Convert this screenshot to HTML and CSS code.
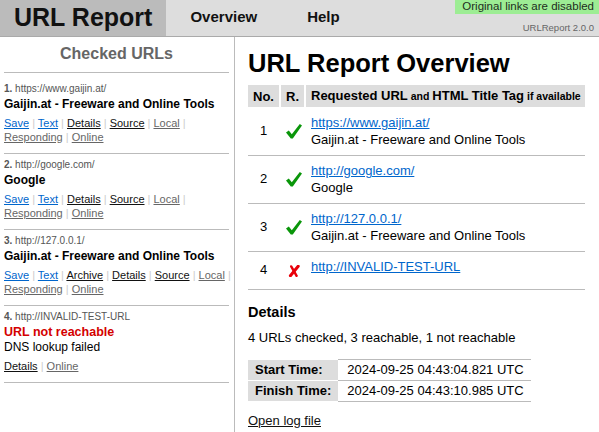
FILE: index.html
```html
<!DOCTYPE html>
<html>
<head>
<meta charset="utf-8">
<title>URL Report</title>
<link rel="stylesheet" href="styles.css">
</head>
<body>
<header class="topbar">
  <div class="logo">URL Report</div>
  <nav class="nav"><span class="nav-item">Overview</span><span class="nav-item">Help</span></nav>
  <div class="badge">Original links are disabled</div>
  <div class="version">URLReport 2.0.0</div>
</header>
<div class="layout">
  <aside class="sidebar">
    <h2 class="side-title">Checked URLs</h2>
    <div class="entry">
      <div class="entry-url"><b>1.</b> https://www.gaijin.at/</div>
      <div class="entry-title">Gaijin.at - Freeware and Online Tools</div>
      <div class="entry-links"><a href="#" class="l-blue">Save</a> <span class="sep">|</span> <a href="#" class="l-blue">Text</a> <span class="sep">|</span> <a href="#" class="l-dark">Details</a> <span class="sep">|</span> <a href="#" class="l-dark">Source</a> <span class="sep">|</span> <a href="#" class="l-gray">Local</a> <span class="sep">|</span> <a href="#" class="l-gray">Responding</a> <span class="sep">|</span> <a href="#" class="l-gray">Online</a></div>
    </div>
    <div class="entry">
      <div class="entry-url"><b>2.</b> http://google.com/</div>
      <div class="entry-title">Google</div>
      <div class="entry-links"><a href="#" class="l-blue">Save</a> <span class="sep">|</span> <a href="#" class="l-blue">Text</a> <span class="sep">|</span> <a href="#" class="l-dark">Details</a> <span class="sep">|</span> <a href="#" class="l-dark">Source</a> <span class="sep">|</span> <a href="#" class="l-gray">Local</a> <span class="sep">|</span> <a href="#" class="l-gray">Responding</a> <span class="sep">|</span> <a href="#" class="l-gray">Online</a></div>
    </div>
    <div class="entry">
      <div class="entry-url"><b>3.</b> http://127.0.0.1/</div>
      <div class="entry-title">Gaijin.at - Freeware and Online Tools</div>
      <div class="entry-links"><a href="#" class="l-blue">Save</a> <span class="sep">|</span> <a href="#" class="l-blue">Text</a> <span class="sep">|</span> <a href="#" class="l-dark">Archive</a> <span class="sep">|</span> <a href="#" class="l-dark">Details</a> <span class="sep">|</span> <a href="#" class="l-dark">Source</a> <span class="sep">|</span> <a href="#" class="l-gray">Local</a> <span class="sep">|</span> <a href="#" class="l-gray">Responding</a> <span class="sep">|</span> <a href="#" class="l-gray">Online</a></div>
    </div>
    <div class="entry">
      <div class="entry-url"><b>4.</b> http://INVALID-TEST-URL</div>
      <div class="entry-title error">URL not reachable</div>
      <div class="entry-note">DNS lookup failed</div>
      <div class="entry-links"><a href="#" class="l-dark">Details</a> <span class="sep">|</span> <a href="#" class="l-gray">Online</a></div>
    </div>
  </aside>
  <main class="main">
    <h1 class="title">URL Report Overview</h1>
    <table class="report">
      <colgroup><col class="c-no"><col class="c-r"><col class="c-url"></colgroup>
      <thead>
        <tr><th class="h-no">No.</th><th class="h-r">R.</th><th class="h-url">Requested URL<small> and </small>HTML Title Tag<small> if available</small></th></tr>
      </thead>
      <tbody>
        <tr>
          <td class="no">1</td>
          <td class="r"><span class="icon"><svg width="16" height="15" viewBox="0 0 16 15"><polygon points="0,8.5 2.8,6.5 5.8,10.2 13.8,0 16,1.6 6.8,14.6 4.8,14.6" fill="#0a960a"/></svg></span></td>
          <td class="url"><a href="#">https://www.gaijin.at/</a><div>Gaijin.at - Freeware and Online Tools</div></td>
        </tr>
        <tr>
          <td class="no">2</td>
          <td class="r"><span class="icon"><svg width="16" height="15" viewBox="0 0 16 15"><polygon points="0,8.5 2.8,6.5 5.8,10.2 13.8,0 16,1.6 6.8,14.6 4.8,14.6" fill="#0a960a"/></svg></span></td>
          <td class="url"><a href="#">http://google.com/</a><div>Google</div></td>
        </tr>
        <tr>
          <td class="no">3</td>
          <td class="r"><span class="icon"><svg width="16" height="15" viewBox="0 0 16 15"><polygon points="0,8.5 2.8,6.5 5.8,10.2 13.8,0 16,1.6 6.8,14.6 4.8,14.6" fill="#0a960a"/></svg></span></td>
          <td class="url"><a href="#">http://127.0.0.1/</a><div>Gaijin.at - Freeware and Online Tools</div></td>
        </tr>
        <tr>
          <td class="no">4</td>
          <td class="r"><span class="icon"><svg width="12" height="12" viewBox="0 0 12 12"><path d="M3.2 1.4 L8.6 10.8" stroke="#e8000a" stroke-width="2.4" stroke-linecap="round" fill="none"/><path d="M10.2 1.2 L2.4 10.8" stroke="#e8000a" stroke-width="3" stroke-linecap="round" fill="none"/></svg></span></td>
          <td class="url"><a href="#">http://INVALID-TEST-URL</a></td>
        </tr>
      </tbody>
    </table>
    <h3 class="details-title">Details</h3>
    <p class="summary">4 URLs checked, 3 reachable, 1 not reachable</p>
    <table class="times">
      <tr><th>Start Time:</th><td>2024-09-25 04:43:04.821 UTC</td></tr>
      <tr><th>Finish Time:</th><td>2024-09-25 04:43:10.985 UTC</td></tr>
    </table>
    <div class="log"><a href="#">Open log file</a></div>
  </main>
</div>
</body>
</html>
```

FILE: styles.css
```css
* { box-sizing: border-box; }
html, body { margin: 0; padding: 0; }
body {
  font-family: "Liberation Sans", Arial, Helvetica, sans-serif;
  font-size: 13px;
  color: #000;
  background: #fff;
}

.topbar {
  position: relative;
  display: flex;
  height: 37px;
  background: #ddd;
  border-bottom: 1px solid #aaa;
}
.logo {
  background: #bbb;
  padding: 0 14px;
  font-size: 25px;
  font-weight: bold;
  line-height: 34px;
  color: #111;
}
.nav {
  display: flex;
  gap: 50px;
  padding-left: 24px;
  font-size: 15px;
  font-weight: bold;
  line-height: 34px;
  color: #111;
}
.badge {
  position: absolute;
  top: 0;
  right: 0;
  height: 14px;
  background: #9ded94;
  color: #1e2e1e;
  font-size: 11.5px;
  line-height: 13px;
  padding: 0 5px 0 7px;
}
.version {
  position: absolute;
  right: 5px;
  top: 22px;
  font-size: 9.5px;
  line-height: 12px;
  color: #666;
}

.layout {
  display: flex;
  min-height: calc(100vh - 37px);
}
.sidebar {
  width: 235px;
  flex: none;
  border-right: 1px solid #bbb;
  padding: 7px 5px 0 4px;
}
.side-title {
  margin: 0 0 5px;
  padding-bottom: 8px;
  border-bottom: 1px solid #bbb;
  font-size: 16px;
  line-height: 20px;
  font-weight: bold;
  color: #666;
  text-align: center;
}
.entry {
  padding: 4px 0 9px;
  border-bottom: 1px solid #bbb;
}
.entry-url {
  font-size: 10px;
  line-height: 14px;
  color: #555;
}
.entry-title {
  font-size: 12px;
  line-height: 16px;
  font-weight: bold;
}
.entry-title.error {
  color: #d40000;
  font-size: 12.5px;
}
.entry-note {
  font-size: 12px;
  line-height: 15px;
}
.entry-links {
  margin-top: 4px;
  margin-right: -5px;
  font-size: 11px;
  line-height: 14px;
}
.entry-links a { text-decoration: underline; }
.l-blue { color: #0066cc; }
.l-dark { color: #111; }
.l-gray { color: #666; }
.sep { color: #ccc; }

.main {
  flex: 1;
  padding: 11px 15px 0 13px;
}
.title {
  margin: 0;
  font-size: 25.5px;
  line-height: 30px;
  font-weight: bold;
}
.report {
  margin-top: 7px;
  width: 337px;
  table-layout: fixed;
  border-collapse: separate;
  border-spacing: 0;
}
.c-no { width: 33px; }
.c-r { width: 25px; }
.c-url { width: 279px; }
.report th {
  background: #ddd;
  font-size: 13px;
  line-height: 15px;
  padding: 3px 5px;
  border-bottom: 1px solid #fff;
  white-space: nowrap;
  font-weight: bold;
}
.report th.h-no, .report th.h-r {
  border-right: 2px solid #fff;
  text-align: center;
  padding: 3px 0;
}
.report th.h-url {
  text-align: left;
  padding: 3px 2px 3px 5px;
}
.report th small {
  font-size: 10.5px;
}
.report td {
  padding: 7px 5px;
  border-bottom: 1px solid #bbb;
  font-size: 13px;
  line-height: 16.5px;
}
.report td.no {
  text-align: center;
  vertical-align: middle;
  padding: 7px 2px 7px 0;
}
.report td.r {
  vertical-align: middle;
  padding: 7px 0;
}
.report td.url {
  vertical-align: top;
  padding-left: 5px;
}
.icon {
  display: flex;
  height: 23px;
  align-items: center;
  justify-content: center;
}
.report a { color: #0066cc; text-decoration: underline; }

.details-title {
  margin: 13px 0 9px;
  font-size: 14.5px;
  line-height: 18px;
  font-weight: bold;
}
.summary {
  margin: 0;
  line-height: 16px;
}
.times {
  margin-top: 13px;
  border-collapse: collapse;
}
.times th {
  background: #ddd;
  text-align: left;
  font-weight: bold;
  padding: 2px 7px;
  line-height: 16px;
  border-top: 1px solid #fff;
  border-bottom: 1px solid #fff;
}
.times td {
  padding: 2px 7px 2px 9px;
  line-height: 16px;
  border-top: 1px solid #bbb;
  border-bottom: 1px solid #bbb;
}
.log {
  margin-top: 11px;
  line-height: 16px;
}
.log a { color: #111; text-decoration: underline; }
```
